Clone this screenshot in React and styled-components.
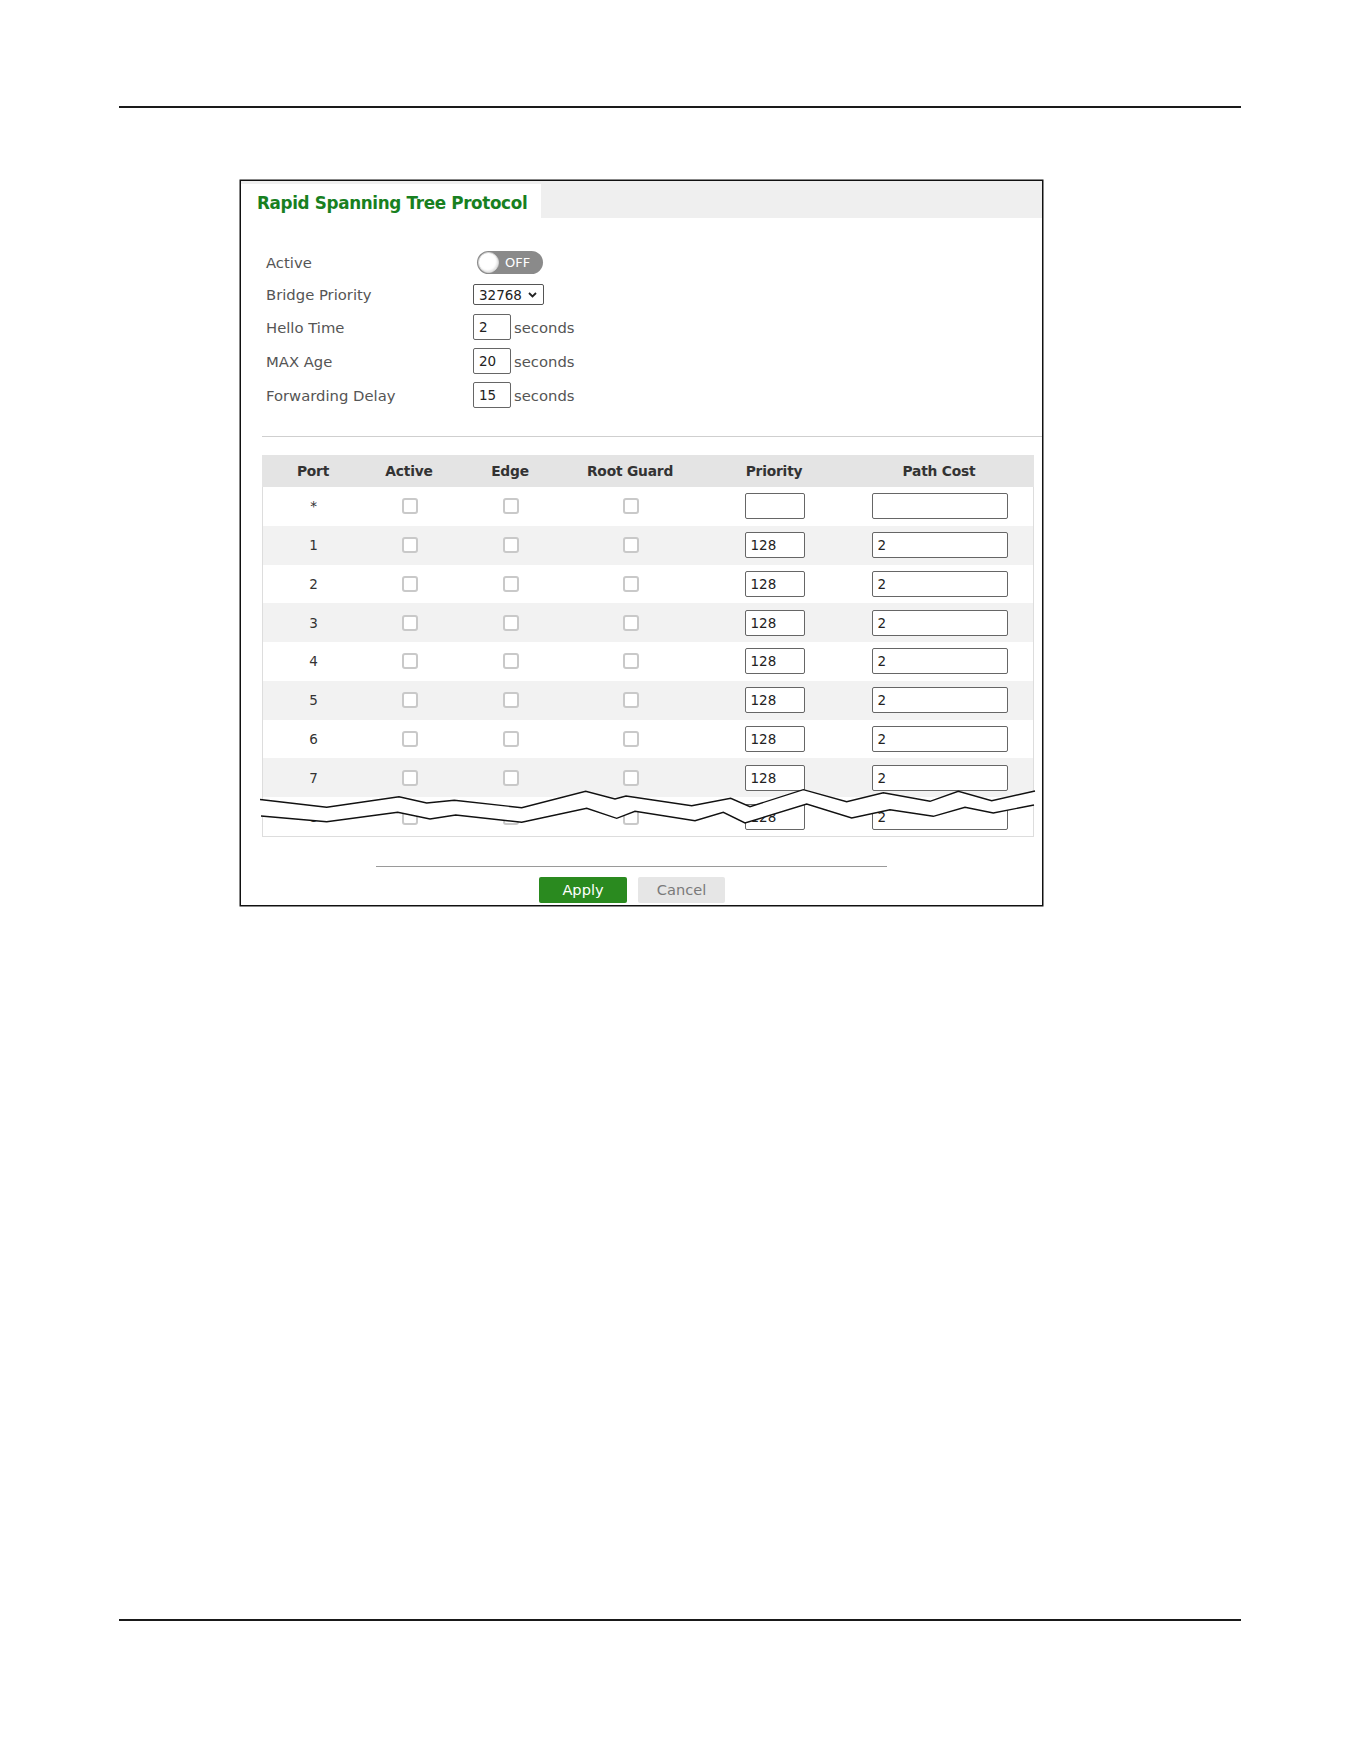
import React from "react";
import styled, { createGlobalStyle } from "styled-components";

const GlobalStyle = createGlobalStyle`
  * {
    box-sizing: border-box;
  }
  body {
    margin: 0;
    background: #fff;
    font-family: "DejaVu Sans", "Liberation Sans", sans-serif;
  }
`;

const Page = styled.div`
  width: 1361px;
  height: 1761px;
  padding-top: 106px;
  background: #fff;
  overflow: hidden;
`;

const PageRule = styled.div`
  margin-left: 119px;
  width: 1122px;
  height: 2px;
  background: #1a1a1a;
  margin-top: ${(p) => p.$top || 0}px;
`;

const Panel = styled.div`
  margin: 72px 0 0 240px;
  width: 803px;
  border: 1px solid #111;
  box-shadow: 0 0 0 0.5px #111;
  padding-bottom: 2px;
`;

const TabBar = styled.div`
  display: flex;
  height: 37px;
  padding-top: 3px;
  background: #efefef;
`;

const Tab = styled.div`
  width: 300px;
  display: flex;
  align-items: center;
  padding: 3px 0 0 16px;
  background: #fff;
`;

const TabTitle = styled.h1`
  margin: 0;
  font-size: 16.8px;
  font-weight: bold;
  color: #18801f;
  letter-spacing: -0.35px;
`;

const Form = styled.div`
  padding: 27px 0 0 25px;
`;

const FormRow = styled.div`
  display: flex;
  align-items: center;
  height: ${(p) => p.$h || 34}px;
`;

const FieldLabel = styled.div`
  width: 207px;
  font-size: 14.8px;
  color: #555;
`;

const Toggle = styled.div`
  margin-left: 4px;
  width: 66px;
  height: 23px;
  border-radius: 12px;
  background: #8a8a8a;
  display: flex;
  align-items: center;
  padding: 0 1px;
`;

const Knob = styled.span`
  width: 21px;
  height: 21px;
  border-radius: 50%;
  background: #fff;
  border: 1px solid #d4d4d4;
  box-shadow: inset -1px -1px 2px rgba(0, 0, 0, 0.12);
`;

const ToggleText = styled.span`
  margin-left: 6px;
  font-size: 13px;
  color: #fff;
`;

const SelectBox = styled.div`
  width: 71px;
  height: 21px;
  border: 1px solid #555;
  border-radius: 2px;
  display: flex;
  align-items: center;
  justify-content: space-between;
  padding: 0 6px 0 5px;
  font-size: 13.5px;
  color: #222;
`;

const TextInput = styled.input`
  width: ${(p) => p.$w || 38}px;
  height: 26px;
  border: 1px solid #666;
  border-radius: 2px;
  padding: 0 0 0 5px;
  font-family: inherit;
  font-size: 13.5px;
  color: #222;
  background: #fff;
  outline: none;
`;

const Unit = styled.span`
  margin-left: 3px;
  font-size: 14.8px;
  color: #555;
`;

const Divider = styled.div`
  margin: 24px 0 0 21px;
  height: 1px;
  background: #cfcfcf;
`;

const Table = styled.div`
  position: relative;
  margin: 18px 0 0 21px;
  width: 772px;
  border-bottom: 1px solid #ddd;
`;

const HeadRow = styled.div`
  display: grid;
  grid-template-columns: 102px 90px 112px 128px 160px 170px;
  height: 32px;
  align-items: center;
  background: #e4e4e4;
`;

const HeadCell = styled.div`
  text-align: center;
  font-size: 13.8px;
  font-weight: bold;
  color: #333;
  letter-spacing: -0.2px;
`;

const Row = styled.div`
  display: grid;
  grid-template-columns: 102px 90px 112px 128px 160px 170px;
  height: ${(p) => p.$h || 38.75}px;
  align-items: center;
  background: ${(p) => (p.$alt ? "#f2f2f2" : "#fff")};
  border-left: 1px solid #ddd;
  border-right: 1px solid #ddd;
`;

const Cell = styled.div`
  display: flex;
  justify-content: center;
  align-items: center;
  margin-left: -1px;
  font-size: 13.5px;
  color: #333;
`;

const Checkbox = styled.span`
  width: 16px;
  height: 16px;
  border: 2px solid #c9c9c9;
  border-radius: 3px;
  background: #fff;
`;

const BreakMark = styled.svg`
  position: absolute;
  left: -6px;
  bottom: 7px;
  width: 784px;
  height: 45px;
  overflow: visible;
`;

const Footer = styled.div`
  margin: 29px 0 0 135px;
  width: 511px;
`;

const FooterRule = styled.div`
  height: 1px;
  background: #9a9a9a;
`;

const Buttons = styled.div`
  display: flex;
  justify-content: center;
  gap: 11px;
  margin-top: 10px;
  padding-left: 1px;
`;

const Button = styled.button`
  width: ${(p) => (p.$primary ? 88 : 87)}px;
  height: 26px;
  border: none;
  border-radius: 2px;
  background: ${(p) => (p.$primary ? "#2a8a1f" : "#e6e6e6")};
  color: ${(p) => (p.$primary ? "#fff" : "#7a7a7a")};
  font-family: inherit;
  font-size: 14.6px;
  padding: 0 0 1px;
`;

const Chevron = () => (
  <svg width="9" height="6" viewBox="0 0 9 6">
    <path d="M1 1 L4.5 4.5 L8 1" fill="none" stroke="#222" strokeWidth="1.8" />
  </svg>
);

const upper = [
  [260, 800.5], [326.7, 808.3], [399, 797.7], [426.7, 804], [454.3, 801.3],
  [521.7, 808.7], [585.7, 792.3], [615, 800], [626, 797], [691.7, 806.7],
  [730.7, 799.3], [750, 807.7], [803.3, 790.7], [846.7, 802.7], [883.3, 793.7],
  [930, 802.3], [958.3, 792.3], [991.7, 801.7], [1035, 792],
];

const lower = [
  [261, 817], [326.7, 822.7], [397.7, 813.3], [430, 820], [455.7, 816],
  [521.7, 823.3], [586.7, 809.3], [616.7, 819.3], [635, 812.3], [695, 821.7],
  [723.3, 813.3], [745, 824], [806.7, 805], [851.7, 819], [890, 810.7],
  [933.3, 817.3], [965, 808.3], [993.3, 814], [1034, 806],
];

// page coords -> svg box (left 256, top 785)
const toPts = (list) => list.map(([x, y]) => `${x - 256},${y - 785}`).join(" ");

const ports = [
  { port: "*", priority: "", cost: "" },
  ...[1, 2, 3, 4, 5, 6, 7, 8].map((n) => ({ port: String(n), priority: "128", cost: "2" })),
];

export default function App() {
  return (
    <>
      <GlobalStyle />
      <Page>
        <PageRule />
        <Panel>
          <TabBar>
            <Tab>
              <TabTitle>Rapid Spanning Tree Protocol</TabTitle>
            </Tab>
          </TabBar>

          <Form>
            <FormRow $h={34}>
              <FieldLabel>Active</FieldLabel>
              <Toggle>
                <Knob />
                <ToggleText>OFF</ToggleText>
              </Toggle>
            </FormRow>
            <FormRow $h={31}>
              <FieldLabel>Bridge Priority</FieldLabel>
              <SelectBox>
                32768
                <Chevron />
              </SelectBox>
            </FormRow>
            <FormRow>
              <FieldLabel>Hello Time</FieldLabel>
              <TextInput defaultValue="2" />
              <Unit>seconds</Unit>
            </FormRow>
            <FormRow>
              <FieldLabel>MAX Age</FieldLabel>
              <TextInput defaultValue="20" />
              <Unit>seconds</Unit>
            </FormRow>
            <FormRow>
              <FieldLabel>Forwarding Delay</FieldLabel>
              <TextInput defaultValue="15" />
              <Unit>seconds</Unit>
            </FormRow>
          </Form>

          <Divider />

          <Table>
            <HeadRow>
              <HeadCell>Port</HeadCell>
              <HeadCell>Active</HeadCell>
              <HeadCell>Edge</HeadCell>
              <HeadCell>Root Guard</HeadCell>
              <HeadCell>Priority</HeadCell>
              <HeadCell>Path Cost</HeadCell>
            </HeadRow>
            {ports.map((p, i) => (
              <Row key={p.port} $alt={i % 2 === 1} $h={i === 8 ? 39 : 38.75}>
                <Cell>{p.port}</Cell>
                <Cell>
                  <Checkbox />
                </Cell>
                <Cell>
                  <Checkbox />
                </Cell>
                <Cell>
                  <Checkbox />
                </Cell>
                <Cell>
                  <TextInput $w={60} defaultValue={p.priority} />
                </Cell>
                <Cell>
                  <TextInput $w={136} defaultValue={p.cost} />
                </Cell>
              </Row>
            ))}
            <BreakMark viewBox="0 0 784 45">
              <polygon points={toPts([...upper, ...lower.slice().reverse()])} fill="#fff" />
              <polyline points={toPts(upper)} fill="none" stroke="#111" strokeWidth="1.4" />
              <polyline points={toPts(lower)} fill="none" stroke="#111" strokeWidth="1.4" />
            </BreakMark>
          </Table>

          <Footer>
            <FooterRule />
            <Buttons>
              <Button $primary>Apply</Button>
              <Button>Cancel</Button>
            </Buttons>
          </Footer>
        </Panel>
        <PageRule $top={713} />
      </Page>
    </>
  );
}
